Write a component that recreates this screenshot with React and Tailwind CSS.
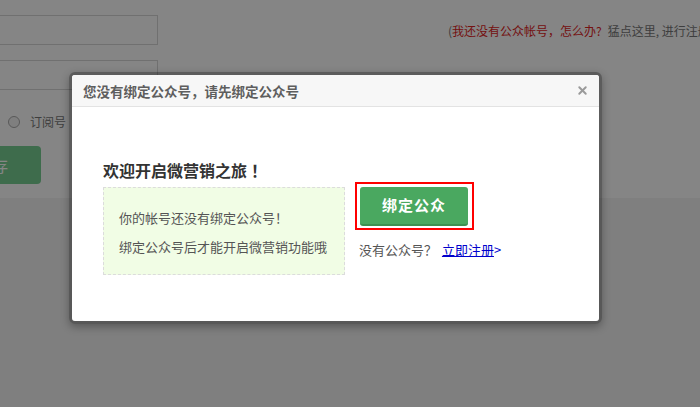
import { X } from 'lucide-react';

const cjk = { fontFamily: '"Noto Sans CJK SC", "Noto Sans", sans-serif' };

function PageBehind() {
    return (
        <div className="flex flex-col h-full">
            <div className="h-[198px] bg-white relative">
                {/* account form, partly off the left edge */}
                <div className="flex flex-col pt-[15px]">
                    <div className="w-[158px] h-[30px] border border-[#d6d6d6] border-l-0 bg-white" />
                    <div className="w-[158px] h-[30px] border border-[#d6d6d6] border-l-0 bg-white mt-[15px]" />
                    <div className="flex items-center h-[20px] mt-[22px] pl-[8px] text-[12px] text-[#777]">
                        <span className="w-[12px] h-[12px] rounded-full border border-[#aaa] bg-[#f4f4f4]" />
                        <span className="ml-[10px]">订阅号</span>
                    </div>
                    <div className="flex justify-end items-center w-[100px] h-[38px] ml-[-59px] mt-[14px] rounded-[4px] bg-[#77cf93] text-white text-[16px] pr-[33px]">
                        保存
                    </div>
                </div>
                <div className="absolute left-[448px] top-[21px] text-[12px] leading-[20px] whitespace-nowrap">
                    <span className="text-[#777]">(</span>
                    <span className="text-[#e02424]">我还没有公众帐号，怎么办?</span>
                    <span className="text-[#777] ml-[6px]">猛点这里, 进行注册</span>
                </div>
            </div>
            <div className="flex-1 bg-[#f4f4f4]" />
        </div>
    );
}

function BindModal() {
    return (
        <div className="absolute left-[69px] top-[72px] w-[533px] border-[3px] border-black/30 rounded-[6px] bg-clip-padding shadow-[0_3px_9px_rgba(0,0,0,0.3)]">
            <div className="bg-white rounded-[3px] overflow-hidden">
                <div className="h-[32px] bg-[#f7f7f7] border-b border-[#e3e3e3] flex items-center justify-between pl-[11px] pr-[10px]">
                    <span className="text-[13.5px] font-bold text-[#5e5e5e] leading-[20px]">您没有绑定公众号，请先绑定公众号</span>
                    <X className="w-[13px] h-[13px] text-[#9a9a9a]" strokeWidth={3.5} />
                </div>
                <div className="h-[214px] pt-[51px] pl-[31px]">
                    <h3 className="text-[16px] font-bold text-[#333] leading-[24px]">欢迎开启微营销之旅<span className="ml-[4px]">！</span></h3>
                    <div className="flex items-start gap-[10px]">
                        <div className="w-[242px] h-[88px] mt-[5px] border border-dashed border-[#dcdcdc] bg-[#f1fde5] pl-[15px] pt-[15px] text-[13px] leading-[29px] text-[#555]">
                            <p>你的帐号还没有绑定公众号！</p>
                            <p>绑定公众号后才能开启微营销功能哦</p>
                        </div>
                        <div className="flex flex-col items-start">
                            <div className="border-2 border-[#ff0000] pt-[3px] pl-[3px] pr-[4px] pb-[2px]">
                                <button className="w-[108px] h-[39px] rounded-[3px] bg-[#4aa860] border-b-2 border-[#3d9050] text-white text-[15px] font-bold tracking-[1px]">
                                    绑定公众
                                </button>
                            </div>
                            <div className="mt-[10px] pl-[4px] text-[13px] leading-[20px] text-[#555] whitespace-nowrap">
                                没有公众号？ <a className="ml-[2px] text-[#0000cc] underline">立即注册</a><span className="text-[#0000cc]">&gt;</span>
                            </div>
                        </div>
                    </div>
                </div>
            </div>
        </div>
    );
}

export default function App() {
    return (
        <div className="relative w-full h-[407px] overflow-hidden" style={cjk}>
            <PageBehind />
            <div className="absolute inset-0 bg-black/[0.48]" />
            <BindModal />
        </div>
    );
}
